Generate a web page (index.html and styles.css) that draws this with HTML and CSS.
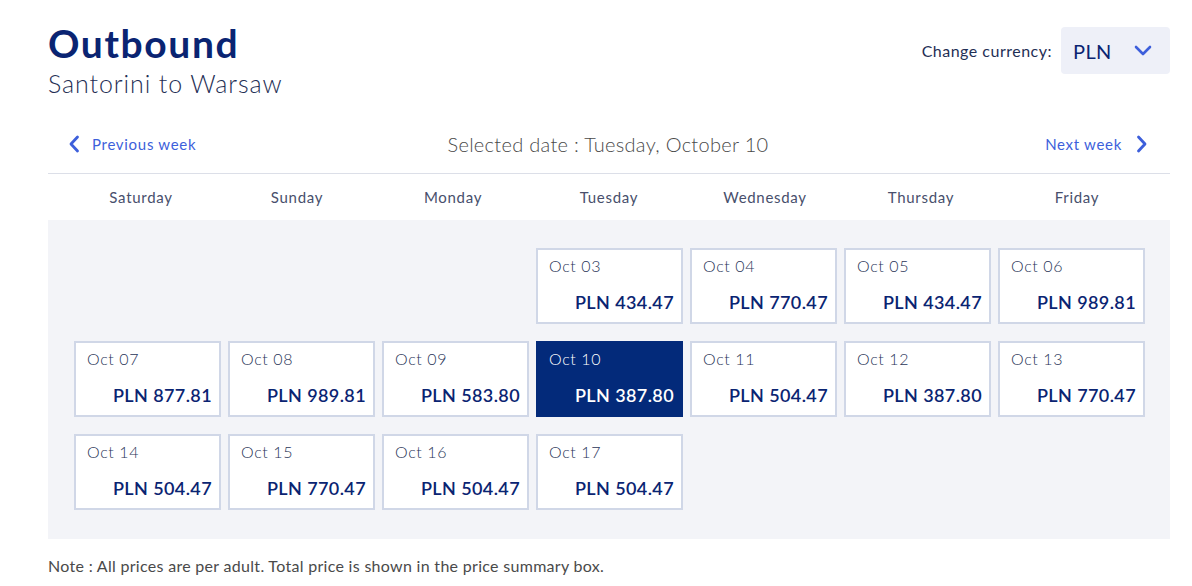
FILE: index.html
```html
<!DOCTYPE html>
<html lang="en">
<head>
<meta charset="utf-8">
<title>Outbound</title>
<link rel="stylesheet" href="styles.css">
</head>
<body>
<div class="page">
  <header class="header">
    <div class="titles">
      <h1 class="title">Outbound</h1>
      <div class="route">Santorini to Warsaw</div>
    </div>
    <div class="currency">
      <span class="currency-label">Change currency:</span>
      <div class="currency-select">
        <span class="currency-value">PLN</span>
        <svg class="currency-chevron" width="18" height="11" viewBox="0 0 18 11"><path d="M2 2 L9 9 L16 2" fill="none" stroke="#3d5fdb" stroke-width="2.6" stroke-linecap="round" stroke-linejoin="round"/></svg>
      </div>
    </div>
  </header>

  <nav class="weeknav">
    <a class="weeklink prev">
      <svg width="12" height="18" viewBox="0 0 12 18"><path d="M9.5 2 L3 9 L9.5 16" fill="none" stroke="#3d5fdb" stroke-width="2.8" stroke-linecap="round" stroke-linejoin="round"/></svg>
      <span>Previous week</span>
    </a>
    <div class="selected">Selected date : Tuesday, October 10</div>
    <a class="weeklink next">
      <span>Next week</span>
      <svg width="12" height="18" viewBox="0 0 12 18"><path d="M2.5 2 L9 9 L2.5 16" fill="none" stroke="#3d5fdb" stroke-width="2.8" stroke-linecap="round" stroke-linejoin="round"/></svg>
    </a>
  </nav>

  <div class="days">
    <div>Saturday</div><div>Sunday</div><div>Monday</div><div>Tuesday</div><div>Wednesday</div><div>Thursday</div><div>Friday</div>
  </div>

  <div class="calendar">
    <div class="cell empty"></div>
    <div class="cell empty"></div>
    <div class="cell empty"></div>
    <div class="cell"><div class="date">Oct 03</div><div class="price">PLN 434.47</div></div>
    <div class="cell"><div class="date">Oct 04</div><div class="price">PLN 770.47</div></div>
    <div class="cell"><div class="date">Oct 05</div><div class="price">PLN 434.47</div></div>
    <div class="cell"><div class="date">Oct 06</div><div class="price">PLN 989.81</div></div>

    <div class="cell"><div class="date">Oct 07</div><div class="price">PLN 877.81</div></div>
    <div class="cell"><div class="date">Oct 08</div><div class="price">PLN 989.81</div></div>
    <div class="cell"><div class="date">Oct 09</div><div class="price">PLN 583.80</div></div>
    <div class="cell active"><div class="date">Oct 10</div><div class="price">PLN 387.80</div></div>
    <div class="cell"><div class="date">Oct 11</div><div class="price">PLN 504.47</div></div>
    <div class="cell"><div class="date">Oct 12</div><div class="price">PLN 387.80</div></div>
    <div class="cell"><div class="date">Oct 13</div><div class="price">PLN 770.47</div></div>

    <div class="cell"><div class="date">Oct 14</div><div class="price">PLN 504.47</div></div>
    <div class="cell"><div class="date">Oct 15</div><div class="price">PLN 770.47</div></div>
    <div class="cell"><div class="date">Oct 16</div><div class="price">PLN 504.47</div></div>
    <div class="cell"><div class="date">Oct 17</div><div class="price">PLN 504.47</div></div>
  </div>

  <p class="note">Note : All prices are per adult. Total price is shown in the price summary box.</p>
</div>
</body>
</html>
```

FILE: styles.css
```css
* { box-sizing: border-box; }
html, body { margin: 0; padding: 0; background: #fff; }
body {
  font-family: "Lato", "Liberation Sans", sans-serif;
  color: #1b2a4e;
}
.page {
  width: 1122px;
  margin-left: 48px;
}
.header {
  display: flex;
  justify-content: space-between;
  align-items: flex-start;
  padding-top: 20px;
  height: 120px;
}
.title {
  margin: 0;
  font-size: 39px;
  line-height: 46px;
  font-weight: 700;
  color: #0a2472;
  letter-spacing: 1.6px;
}
.route {
  font-size: 25px;
  line-height: 30px;
  font-weight: 300;
  color: #1f2f55;
  letter-spacing: 0.9px;
  margin-top: 2px;
}
.currency {
  display: flex;
  align-items: center;
  gap: 9px;
  margin-top: 7px;
}
.currency-label {
  font-size: 16px;
  letter-spacing: 0.5px;
  color: #1f2f55;
}
.currency-select {
  width: 109px;
  height: 47px;
  background: #eef0f8;
  border-radius: 4px;
  display: flex;
  align-items: center;
  justify-content: space-between;
  padding: 0 18px 0 12px;
}
.currency-value {
  font-size: 20px;
  letter-spacing: 0.4px;
  color: #0a2472;
}
.weeknav {
  display: grid;
  grid-template-columns: 1fr auto 1fr;
  align-items: center;
  height: 54px;
  border-bottom: 1px solid #dcdfe8;
  padding: 0 22px 6px 20px;
}
.weeklink {
  display: flex;
  align-items: center;
  gap: 12px;
  color: #3d5fdb;
  font-size: 15px;
  letter-spacing: 0.7px;
}
.weeklink.next {
  justify-self: end;
  gap: 14px;
}
.selected {
  font-size: 20px;
  font-weight: 300;
  letter-spacing: 0.3px;
  color: #4a4a4a;
}
.days {
  display: grid;
  grid-template-columns: repeat(7, 156px);
  margin-left: 15px;
  height: 46px;
  align-items: center;
  text-align: center;
  font-size: 15px;
  letter-spacing: 0.7px;
  color: #484f6c;
}
.calendar {
  background: #f3f4f8;
  padding: 28px 26px 29px;
  display: grid;
  grid-template-columns: repeat(7, 147px);
  column-gap: 7px;
  row-gap: 17px;
}
.cell {
  height: 76px;
  background: #fff;
  border: 2px solid #d0d7e7;
  padding: 6px 7px 9px 11px;
  display: flex;
  flex-direction: column;
  justify-content: space-between;
}
.cell.empty {
  background: transparent;
  border: 0;
}
.date {
  font-size: 16px;
  font-weight: 300;
  letter-spacing: 0.6px;
  color: #2a3558;
}
.price {
  text-align: right;
  font-size: 18px;
  font-weight: 600;
  letter-spacing: 0.4px;
  color: #0a2472;
}
.cell.active {
  background: #032a7a;
  border-color: #032a7a;
}
.cell.active .date, .cell.active .price { color: #fff; }
.note {
  margin: 17px 0 0;
  font-size: 16px;
  letter-spacing: 0.3px;
  color: #4a4a4a;
}
```
